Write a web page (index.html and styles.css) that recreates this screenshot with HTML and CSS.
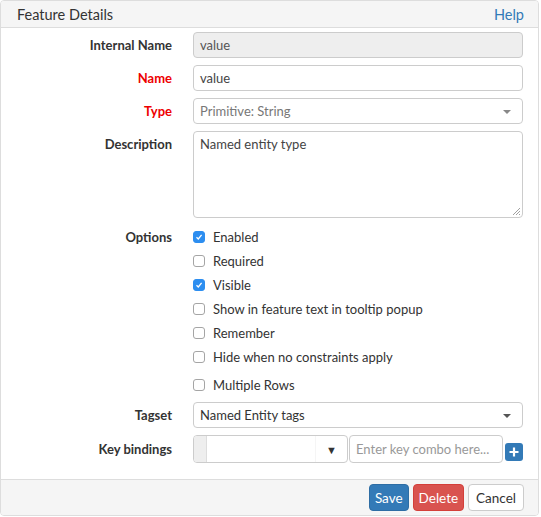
FILE: index.html
```html
<!DOCTYPE html>
<html>
<head>
<meta charset="utf-8">
<link rel="stylesheet" href="styles.css">
</head>
<body>
<div class="panel">
  <div class="panel-head">
    <span class="title">Feature Details</span>
    <a class="help">Help</a>
  </div>
  <div class="form">
    <label class="lbl">Internal Name</label>
    <div class="ctl"><div class="input readonly">value</div></div>

    <label class="lbl req">Name</label>
    <div class="ctl"><div class="input">value</div></div>

    <label class="lbl req">Type</label>
    <div class="ctl"><div class="input select muted">Primitive: String<span class="caret grey"></span></div></div>

    <label class="lbl">Description</label>
    <div class="ctl"><div class="input textarea">Named entity type<svg class="grip" width="8" height="8" viewBox="0 0 8 8"><path d="M1 8 L8 1 M4 8 L8 4 M7 8 L8 7" stroke="#888" stroke-width="0.8"/></svg></div></div>

    <label class="lbl lbl-opt">Options</label>
    <div class="ctl checks">
      <div class="check"><span class="box on"><svg width="8" height="8" viewBox="0 0 8 8"><path d="M1.5 4.2 L3.3 6 L6.6 1.8" stroke="#fff" stroke-width="1.3" fill="none"/></svg></span>Enabled</div>
      <div class="check"><span class="box"></span>Required</div>
      <div class="check"><span class="box on"><svg width="8" height="8" viewBox="0 0 8 8"><path d="M1.5 4.2 L3.3 6 L6.6 1.8" stroke="#fff" stroke-width="1.3" fill="none"/></svg></span>Visible</div>
      <div class="check"><span class="box"></span>Show in feature text in tooltip popup</div>
      <div class="check"><span class="box"></span>Remember</div>
      <div class="check"><span class="box"></span>Hide when no constraints apply</div>
    </div>

    <div class="spacer"></div>
    <div class="ctl checks multi">
      <div class="check"><span class="box"></span>Multiple Rows</div>
    </div>

    <label class="lbl">Tagset</label>
    <div class="ctl"><div class="input select dark">Named Entity tags<span class="caret"></span></div></div>

    <label class="lbl lbl-keys">Key bindings</label>
    <div class="ctl keys">
      <div class="keysel">
        <span class="addon"></span>
        <span class="keyval"></span>
        <span class="keycaret">&#9660;</span>
      </div>
      <div class="input keyinput">Enter key combo here...</div>
      <span class="plus"><svg width="12" height="12" viewBox="0 0 12 12"><path d="M6 1.5 V10.5 M1.5 6 H10.5" stroke="#fff" stroke-width="2.2"/></svg></span>
    </div>
  </div>
  <div class="panel-foot">
    <button class="btn primary">Save</button>
    <button class="btn danger">Delete</button>
    <button class="btn plain">Cancel</button>
  </div>
</div>
</body>
</html>
```
FILE: styles.css
```css
* { box-sizing: border-box; }
body {
  margin: 0;
  background: #fff;
  font-family: Lato, "Open Sans", sans-serif;
  font-size: 13px;
  color: #333;
}
.panel {
  width: 539px;
  height: 516px;
  border: 1px solid #ddd;
  border-radius: 4px;
  display: flex;
  flex-direction: column;
  overflow: hidden;
}
.panel-head {
  height: 27px;
  background: #f5f5f5;
  border-bottom: 1px solid #ddd;
  display: flex;
  align-items: center;
  justify-content: space-between;
  padding: 0 14px 0 16px;
  font-size: 14.5px;
}
.title { color: #333; }
.help { color: #337ab7; }
.form {
  flex: 1;
  display: grid;
  grid-template-columns: 171px 330px;
  column-gap: 21px;
  align-content: start;
  padding-top: 4px;
}
.lbl {
  text-align: right;
  font-weight: bold;
  height: 26px;
  line-height: 26px;
  margin-bottom: 7px;
}
.lbl.req { color: #e00; }
.spacer { height: 0; }
.ctl { margin-bottom: 7px; }
.input {
  height: 26px;
  border: 1px solid #ccc;
  border-radius: 4px;
  padding: 0 6px;
  line-height: 24px;
  color: #444;
  position: relative;
  background: #fff;
}
.input.readonly { background: #eee; color: #555; }
.input.muted { color: #777; }
.input.dark { color: #333; }
.caret {
  position: absolute;
  right: 11px;
  top: 11px;
  border-left: 4px solid transparent;
  border-right: 4px solid transparent;
  border-top: 4px solid #555;
}
.caret.grey { border-top-color: #888; }
.input.textarea {
  height: 87px;
  line-height: 18px;
  padding-top: 3px;
}
.grip { position: absolute; right: 2px; bottom: 2px; }
.lbl-opt { height: 24px; line-height: 24px; margin-bottom: 0; }
.checks { margin-bottom: 4px; }
.check {
  height: 24px;
  display: flex;
  align-items: center;
  color: #333;
}
.box {
  width: 12px;
  height: 12px;
  border: 1px solid #a5a5a5;
  border-radius: 3px;
  margin-right: 8px;
  display: flex;
  align-items: center;
  justify-content: center;
  background: #fff;
}
.box.on { background: #2d8ef0; border-color: #2d8ef0; }
.multi { margin-bottom: 5px; }
.lbl-keys { height: 28px; line-height: 28px; }
.keys {
  display: flex;
  align-items: center;
  height: 28px;
}
.keysel {
  width: 156px;
  height: 28px;
  border: 1px solid #ccc;
  border-radius: 4px;
  display: flex;
  overflow: hidden;
}
.addon { width: 13px; background: #eee; border-right: 1px solid #ddd; }
.keyval { flex: 1; }
.keycaret {
  width: 32px;
  font-size: 11px;
  line-height: 28px;
  text-align: center;
  color: #333;
  border-left: 1px solid #f5f5f5;
}
.keyinput {
  width: 155px;
  height: 28px;
  line-height: 26px;
  margin-left: 1px;
  color: #999;
}
.plus {
  margin-left: 2px;
  width: 18px;
  height: 18px;
  background: #337ab7;
  border-radius: 3px;
  display: flex;
  align-items: center;
  justify-content: center;
  margin-top: 6px;
}
.panel-foot {
  height: 36px;
  background: #f5f5f5;
  border-top: 1px solid #ddd;
  display: flex;
  justify-content: flex-end;
  align-items: center;
  gap: 4px;
  padding-right: 14px;
}
.btn {
  font-family: inherit;
  font-size: 13.5px;
  height: 27px;
  padding: 0 5px;
  border-radius: 4px;
  border: 1px solid transparent;
}
.primary { background: #337ab7; border-color: #2e6da4; color: #fff; }
.danger { background: #d9534f; border-color: #d43f3a; color: #fff; }
.plain { background: #fff; border-color: #ccc; color: #333; padding: 0 7px; }
```
